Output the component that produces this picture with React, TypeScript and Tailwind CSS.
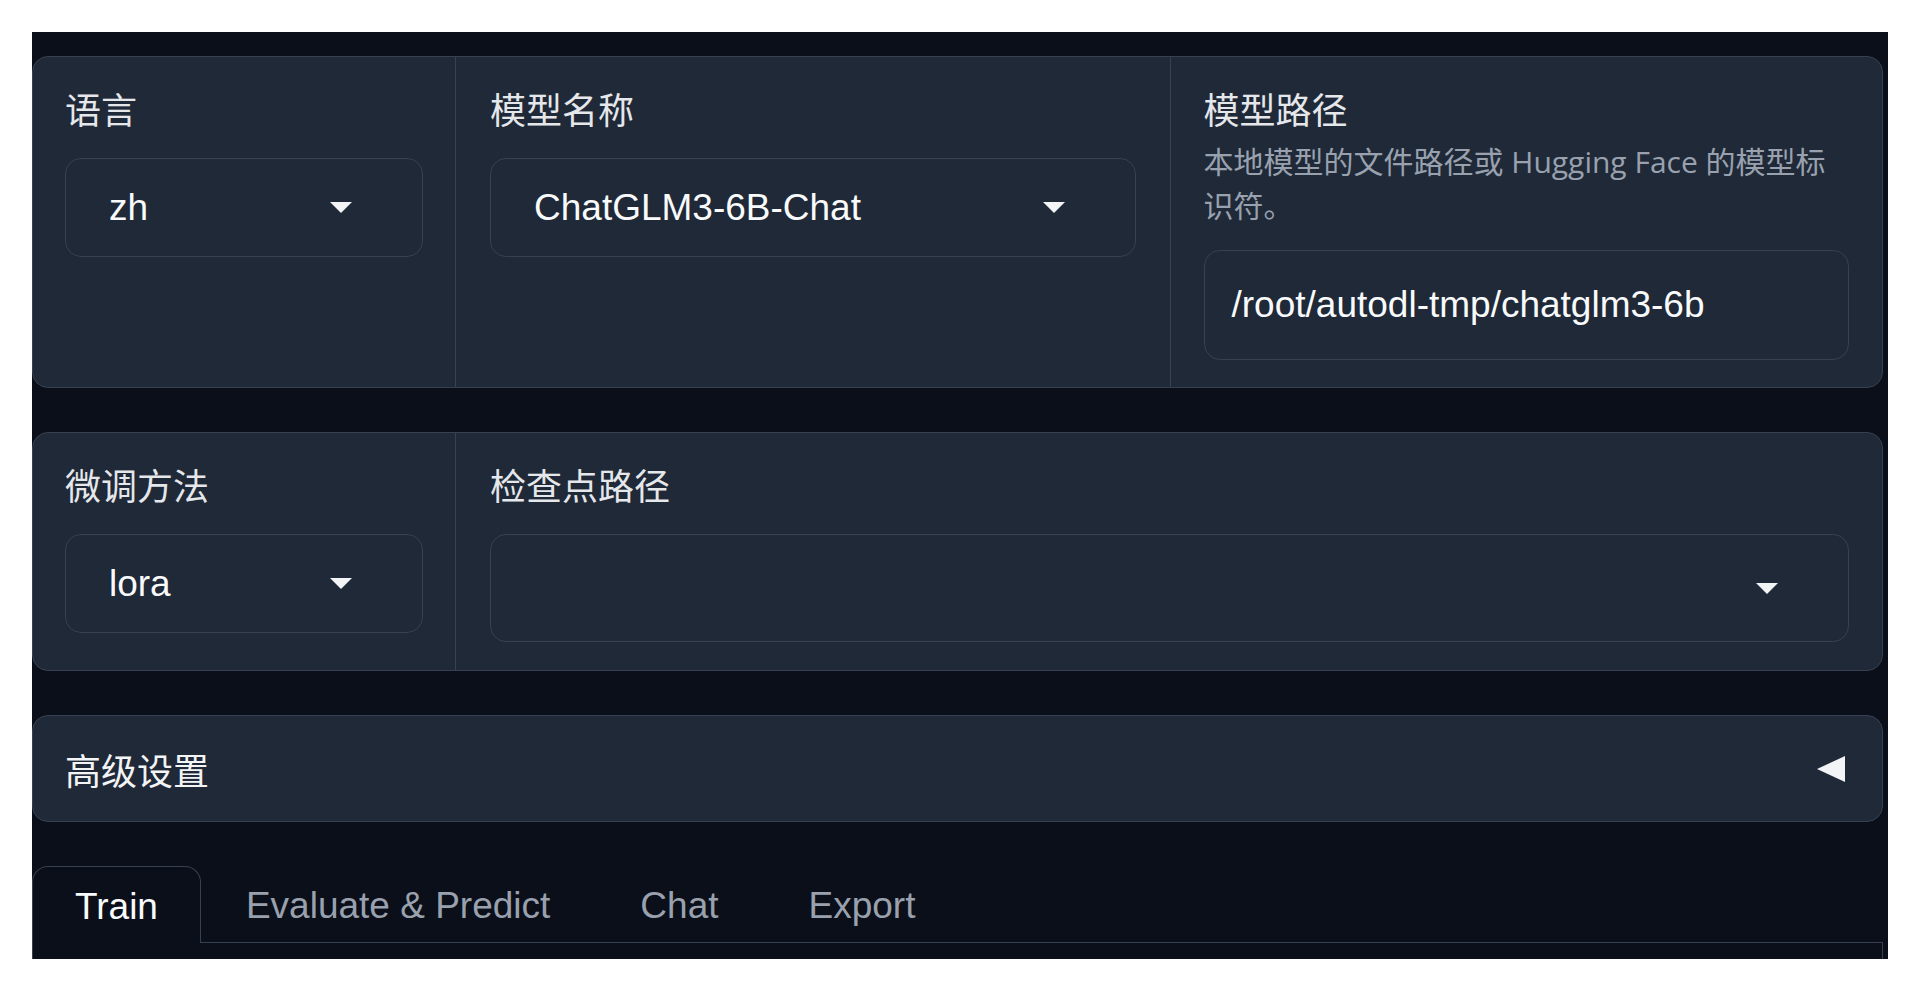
import React from "react";

const sans = "font-['Liberation_Sans','Noto_Sans_CJK_SC',sans-serif]";
const cjk = "font-['Noto_Sans_CJK_SC',sans-serif]";
const hint = "font-['Open_Sans','Noto_Sans_CJK_SC',sans-serif]";

const DownArrow = () => (
  <svg width="22" height="11" viewBox="0 0 22 11" className="shrink-0 fill-gray-100">
    <polygon points="0,0 22,0 11,11" />
  </svg>
);

const Label = ({ children }: { children: React.ReactNode }) => (
  <div className={`${cjk} text-[36px] leading-[54px] text-gray-200`}>{children}</div>
);

const Dropdown = ({ value, tall }: { value?: string; tall?: boolean }) => (
  <div
    className={`mt-[23px] flex items-center rounded-2xl border border-[#374151] bg-[#1f2937] pl-[43px] pr-[70px] ${
      tall ? "h-[108px]" : "h-[99px]"
    }`}
  >
    <span className={`${sans} flex-1 truncate text-[37px] text-gray-50`}>{value}</span>
    <DownArrow />
  </div>
);

export default function App() {
  return (
    <div className="min-h-screen bg-white p-[32px] pb-[31px]">
      <div className="flex h-[927px] flex-col gap-[44px] overflow-hidden bg-[#0b0f19] pt-[24px] pr-[5px]">
        {/* model row */}
        <div className="flex rounded-2xl border border-[#374151] bg-[#1f2937]">
          <div className="w-[422px] shrink-0 px-[32px] pt-[24px] pb-[27px]">
            <Label>语言</Label>
            <Dropdown value="zh" />
          </div>
          <div className="flex-1 border-l border-[#374151] pl-[34px] pr-[34px] pt-[24px] pb-[27px]">
            <Label>模型名称</Label>
            <Dropdown value="ChatGLM3-6B-Chat" />
          </div>
          <div className="flex-1 border-l border-[#374151] px-[33px] pt-[24px] pb-[27px]">
            <Label>模型路径</Label>
            <div className={`${hint} mt-[5px] text-[30px] leading-[44px] text-gray-400`}>
              本地模型的文件路径或 Hugging Face 的模型标识符。
            </div>
            <div className="mt-[22px] flex h-[110px] items-center rounded-2xl border border-[#374151] bg-[#1f2937] pl-[27px]">
              <span className={`${sans} text-[37px] text-gray-50`}>/root/autodl-tmp/chatglm3-6b</span>
            </div>
          </div>
        </div>

        {/* finetuning row */}
        <div className="flex rounded-2xl border border-[#374151] bg-[#1f2937]">
          <div className="w-[422px] shrink-0 px-[32px] pt-[24px] pb-[28px]">
            <Label>微调方法</Label>
            <Dropdown value="lora" />
          </div>
          <div className="flex-1 border-l border-[#374151] pl-[34px] pr-[33px] pt-[24px] pb-[28px]">
            <Label>检查点路径</Label>
            <Dropdown tall />
          </div>
        </div>

        {/* advanced accordion */}
        <div className="flex h-[107px] shrink-0 items-center justify-between rounded-2xl border border-[#374151] bg-[#1f2937] pl-[32px] pr-[37px]">
          <span className={`${cjk} text-[36px] text-gray-100`}>高级设置</span>
          <svg width="28" height="26" viewBox="0 0 28 26" className="fill-gray-100">
            <polygon points="28,0 28,26 0,13" />
          </svg>
        </div>

        {/* tabs */}
        <div className="flex flex-1 flex-col">
          <div className={`${sans} flex h-[77px] shrink-0 items-stretch text-[37px]`}>
            <div className="flex items-center rounded-t-2xl border border-b-0 border-[#374151] px-[42px] pt-[3px] text-gray-50">
              Train
            </div>
            <div className="flex items-center border-b border-[#374151] px-[45px] pt-[3px] text-gray-400">
              Evaluate &amp; Predict
            </div>
            <div className="flex items-center border-b border-[#374151] px-[45px] pt-[3px] text-gray-400">Chat</div>
            <div className="flex items-center border-b border-[#374151] px-[45px] pt-[3px] text-gray-400">Export</div>
            <div className="flex-1 border-b border-[#374151]" />
          </div>
          <div className="flex-1 border-x border-[#374151]" />
        </div>
      </div>
    </div>
  );
}
